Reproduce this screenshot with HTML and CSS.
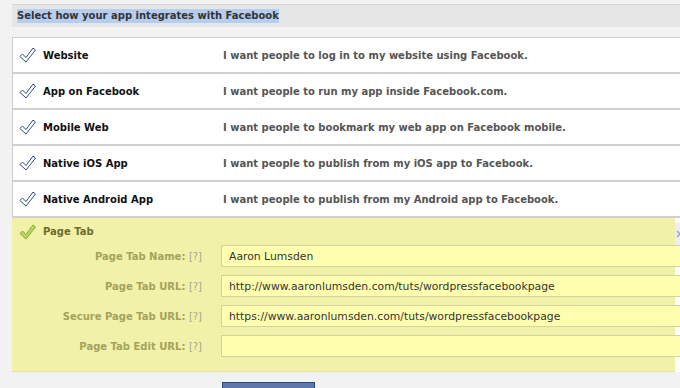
FILE: index.html
```html
<!DOCTYPE html>
<html>
<head>
  <title>Select how your app integrates with Facebook</title>
  <meta name="viewport" content="width=device-width, initial-scale=1.0">
  <link rel="stylesheet" href="styles.css">
</head>
<body>
  <div class="header"><span class="selected">Select how your app integrates with Facebook</span></div>

  <div class="apps">
    <div class="row">
      <svg class="check" viewBox="0 0 17 16"><polygon points="1,9.5 3.5,7 7,10.5 14,1 16.5,3 7,15"/></svg>
      <span class="name">Website</span>
      <span class="desc">I want people to log in to my website using Facebook.</span>
    </div>
    <div class="row">
      <svg class="check" viewBox="0 0 17 16"><polygon points="1,9.5 3.5,7 7,10.5 14,1 16.5,3 7,15"/></svg>
      <span class="name">App on Facebook</span>
      <span class="desc">I want people to run my app inside Facebook.com.</span>
    </div>
    <div class="row">
      <svg class="check" viewBox="0 0 17 16"><polygon points="1,9.5 3.5,7 7,10.5 14,1 16.5,3 7,15"/></svg>
      <span class="name">Mobile Web</span>
      <span class="desc">I want people to bookmark my web app on Facebook mobile.</span>
    </div>
    <div class="row">
      <svg class="check" viewBox="0 0 17 16"><polygon points="1,9.5 3.5,7 7,10.5 14,1 16.5,3 7,15"/></svg>
      <span class="name">Native iOS App</span>
      <span class="desc">I want people to publish from my iOS app to Facebook.</span>
    </div>
    <div class="row">
      <svg class="check" viewBox="0 0 17 16"><polygon points="1,9.5 3.5,7 7,10.5 14,1 16.5,3 7,15"/></svg>
      <span class="name">Native Android App</span>
      <span class="desc">I want people to publish from my Android app to Facebook.</span>
    </div>

    <div class="tab-wrap">
      <div class="tab">
        <div class="tab-head">
          <svg class="check done" viewBox="0 0 17 16"><polygon points="1,9.5 3.5,7 7,10.5 14,1 16.5,3 7,15"/></svg>
          <span class="tab-title">Page Tab</span>
        </div>
        <div class="field">
          <label>Page Tab Name: <span class="help">[?]</span></label>
          <input type="text" value="Aaron Lumsden">
        </div>
        <div class="field">
          <label>Page Tab URL: <span class="help">[?]</span></label>
          <input type="text" value="http://www.aaronlumsden.com/tuts/wordpressfacebookpage">
        </div>
        <div class="field">
          <label>Secure Page Tab URL: <span class="help">[?]</span></label>
          <input type="text" value="https://www.aaronlumsden.com/tuts/wordpressfacebookpage">
        </div>
        <div class="field">
          <label>Page Tab Edit URL: <span class="help">[?]</span></label>
          <input type="text" value="">
        </div>
      </div>
      <div class="close">
        <svg viewBox="0 0 8 8"><path d="M1,1 L7,7 M7,1 L1,7"/></svg>
      </div>
    </div>
  </div>

  <div class="actions">
    <button type="button" class="save"></button>
  </div>
</body>
</html>
```

FILE: styles.css
```css
* {
  box-sizing: border-box;
}

body {
  margin: 0;
  background-color: #f2f2f2;
  font-family: "DejaVu Sans", sans-serif;
  font-size: 10px;
  color: #333;
  overflow: hidden;
}

.header {
  margin: 4px 0 10px 12px;
  height: 23px;
  padding-left: 5px;
  border-top: 1px solid #d6d6d6;
  background-color: #e6e6e6;
  display: flex;
  align-items: center;
}

.selected {
  background-color: #b5cdef;
  font-weight: bold;
  padding: 1px 0 2px;
}

.apps {
  margin-left: 12px;
  border-top: 1px solid #cccccc;
  background-color: #fff;
}

.row {
  height: 36px;
  padding-left: 6px;
  border-left: 1px solid #cccccc;
  border-bottom: 2px solid #d0d0d0;
  display: flex;
  align-items: center;
}

.check {
  width: 17px;
  height: 16px;
  flex: none;
}

.check polygon {
  fill: #fff;
  stroke: #2e4b8c;
  stroke-width: 1;
}

.check.done polygon {
  fill: #b8d862;
  stroke: #86ac34;
}

.name {
  width: 180px;
  margin-left: 7px;
  font-weight: bold;
  color: #111;
}

.desc {
  font-weight: bold;
  color: #555;
}

/* Page tab panel */
.tab-wrap {
  display: flex;
  position: relative;
  background-color: #fff;
}

.tab {
  width: 663px;
  flex: none;
  padding: 0 0 14px;
  background-color: #f1f1a9;
  border-bottom: 1px solid #e6e69a;
}

.tab-head {
  height: 27px;
  padding-left: 7px;
  display: flex;
  align-items: center;
}

.tab-title {
  margin-left: 7px;
  font-weight: bold;
  color: #6d6d2e;
}

.field {
  display: flex;
  align-items: center;
  margin-bottom: 8px;
}

.field:last-child {
  margin-bottom: 0;
}

.field label {
  width: 190px;
  flex: none;
  margin-right: 19px;
  text-align: right;
  font-weight: bold;
  color: #a3a35c;
}

.help {
  font-weight: normal;
  color: #aaa98c;
}

.field input {
  width: 470px;
  flex: none;
  height: 22px;
  padding: 0 7px;
  border: 1px solid #d2d2a2;
  background-color: #ffffaf;
  font-family: "DejaVu Sans", sans-serif;
  font-size: 10.8px;
  color: #333;
  outline: none;
}

.close {
  position: absolute;
  top: 5px;
  left: 663px;
  width: 5px;
  height: 22px;
  background-color: #eceef5;
  overflow: hidden;
}

.close svg {
  display: block;
  width: 8px;
  height: 8px;
  margin: 7px 0 0 1px;
}

.close path {
  stroke: #a3acc8;
  stroke-width: 1.6;
}

.actions {
  padding: 10px 0 0 222px;
}

.save {
  width: 93px;
  height: 26px;
  border: 1px solid #29447e;
  background-color: #5f78ab;
}
```
